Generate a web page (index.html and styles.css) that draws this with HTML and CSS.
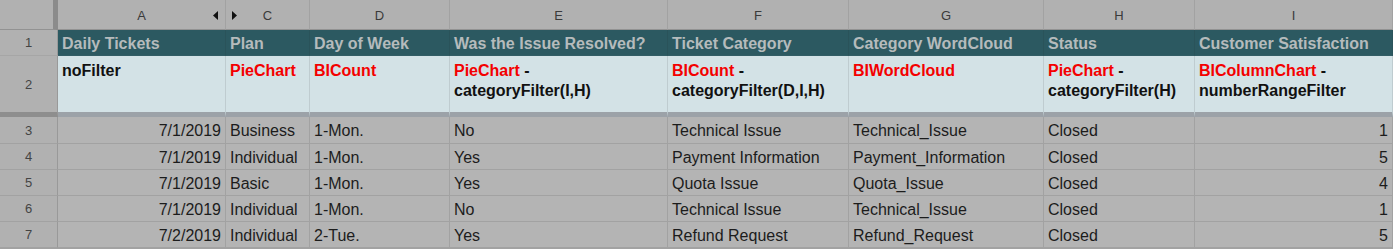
FILE: index.html
```html
<!DOCTYPE html>
<html>
<head>
<meta charset="utf-8">
<link rel="stylesheet" href="styles.css">
</head>
<body>
<div class="sheet">
  <div class="cell corner"></div>
  <div class="cell colhead">A<svg class="arrow arrow-left" width="5" height="9" viewBox="0 0 5 9"><polygon points="0,4.5 5,0 5,9" fill="#111"/></svg></div>
  <div class="cell colhead">C<svg class="arrow arrow-right" width="5" height="9" viewBox="0 0 5 9"><polygon points="5,4.5 0,0 0,9" fill="#111"/></svg></div>
  <div class="cell colhead">D</div>
  <div class="cell colhead">E</div>
  <div class="cell colhead">F</div>
  <div class="cell colhead">G</div>
  <div class="cell colhead">H</div>
  <div class="cell colhead">I</div>

  <div class="cell rowhead r1">1</div>
  <div class="cell title">Daily Tickets</div>
  <div class="cell title">Plan</div>
  <div class="cell title">Day of Week</div>
  <div class="cell title">Was the Issue Resolved?</div>
  <div class="cell title">Ticket Category</div>
  <div class="cell title">Category WordCloud</div>
  <div class="cell title">Status</div>
  <div class="cell title">Customer Satisfaction</div>

  <div class="cell rowhead r2">2</div>
  <div class="cell spec">noFilter</div>
  <div class="cell spec"><span class="red">PieChart</span></div>
  <div class="cell spec"><span class="red">BICount</span></div>
  <div class="cell spec"><span class="red">PieChart</span> -<br>categoryFilter(I,H)</div>
  <div class="cell spec"><span class="red">BICount</span> -<br>categoryFilter(D,I,H)</div>
  <div class="cell spec"><span class="red">BIWordCloud</span></div>
  <div class="cell spec"><span class="red">PieChart</span> -<br>categoryFilter(H)</div>
  <div class="cell spec"><span class="red">BIColumnChart</span> -<br>numberRangeFilter</div>

  <div class="cell rowhead first">3</div>
  <div class="cell data num first">7/1/2019</div>
  <div class="cell data first">Business</div>
  <div class="cell data first">1-Mon.</div>
  <div class="cell data first">No</div>
  <div class="cell data first">Technical Issue</div>
  <div class="cell data first">Technical_Issue</div>
  <div class="cell data first">Closed</div>
  <div class="cell data num first">1</div>

  <div class="cell rowhead">4</div>
  <div class="cell data num">7/1/2019</div>
  <div class="cell data">Individual</div>
  <div class="cell data">1-Mon.</div>
  <div class="cell data">Yes</div>
  <div class="cell data">Payment Information</div>
  <div class="cell data">Payment_Information</div>
  <div class="cell data">Closed</div>
  <div class="cell data num">5</div>

  <div class="cell rowhead">5</div>
  <div class="cell data num">7/1/2019</div>
  <div class="cell data">Basic</div>
  <div class="cell data">1-Mon.</div>
  <div class="cell data">Yes</div>
  <div class="cell data">Quota Issue</div>
  <div class="cell data">Quota_Issue</div>
  <div class="cell data">Closed</div>
  <div class="cell data num">4</div>

  <div class="cell rowhead">6</div>
  <div class="cell data num">7/1/2019</div>
  <div class="cell data">Individual</div>
  <div class="cell data">1-Mon.</div>
  <div class="cell data">No</div>
  <div class="cell data">Technical Issue</div>
  <div class="cell data">Technical_Issue</div>
  <div class="cell data">Closed</div>
  <div class="cell data num">1</div>

  <div class="cell rowhead">7</div>
  <div class="cell data num">7/2/2019</div>
  <div class="cell data">Individual</div>
  <div class="cell data">2-Tue.</div>
  <div class="cell data">Yes</div>
  <div class="cell data">Refund Request</div>
  <div class="cell data">Refund_Request</div>
  <div class="cell data">Closed</div>
  <div class="cell data num">5</div>
</div>
</body>
</html>
```

FILE: styles.css
```css
html, body {
  margin: 0;
  padding: 0;
  width: 1393px;
  height: 249px;
  overflow: hidden;
  background: #b4b4b4;
}

.sheet {
  display: grid;
  grid-template-columns: 58px 168px 84px 140px 218px 181px 195px 151px 198px;
  grid-template-rows: 30px 26px 61px 27px 26px 26px 26px 26px;
  font-family: "Liberation Sans", Arial, sans-serif;
  font-size: 16px;
  line-height: 20px;
  border-bottom: 1px solid #a2a2a2;
}

.cell {
  box-sizing: border-box;
  border-right: 1px solid #a2a2a2;
  border-bottom: 1px solid #a2a2a2;
  padding: 0 4px;
  white-space: nowrap;
  overflow: hidden;
}

.corner {
  background: #b1b1b1;
  border-right: 5px solid #8b8b8b;
  border-bottom: 1px solid #929292;
}

.colhead {
  position: relative;
  background: #b1b1b1;
  border-bottom: 1px solid #929292;
  color: #3a3a3a;
  font-size: 13px;
  display: flex;
  align-items: center;
  justify-content: center;
  padding-top: 3px;
}

.arrow {
  position: absolute;
  top: 11px;
}

.arrow-left {
  right: 7px;
}

.arrow-right {
  left: 6px;
}

.rowhead {
  background: #b1b1b1;
  color: #444;
  font-size: 13px;
  display: flex;
  align-items: center;
  justify-content: center;
  border-right: 1px solid #999;
  padding-top: 1px;
}

.rowhead.r1 {
  border-bottom: 1px solid #a6a6a6;
}

.rowhead.r2 {
  border-bottom: 5px solid #8e8e8e;
}

.title {
  background: #2c5961;
  color: #b5bbbc;
  font-weight: bold;
  display: flex;
  align-items: center;
  padding-top: 2px;
  border-right: 1px solid #2a535a;
  border-bottom: 1px solid #325d65;
}

.spec {
  background: #d3e2e6;
  color: #111;
  font-weight: bold;
  padding-top: 5px;
  border-right: 1px solid #bfccd0;
  border-bottom: 5px solid #9ca2a8;
}

.red {
  color: #f40000;
}

.data {
  background: #b4b4b4;
  color: #1c1c1c;
  display: flex;
  align-items: center;
  padding-top: 2px;
}

.num {
  justify-content: flex-end;
}
```
